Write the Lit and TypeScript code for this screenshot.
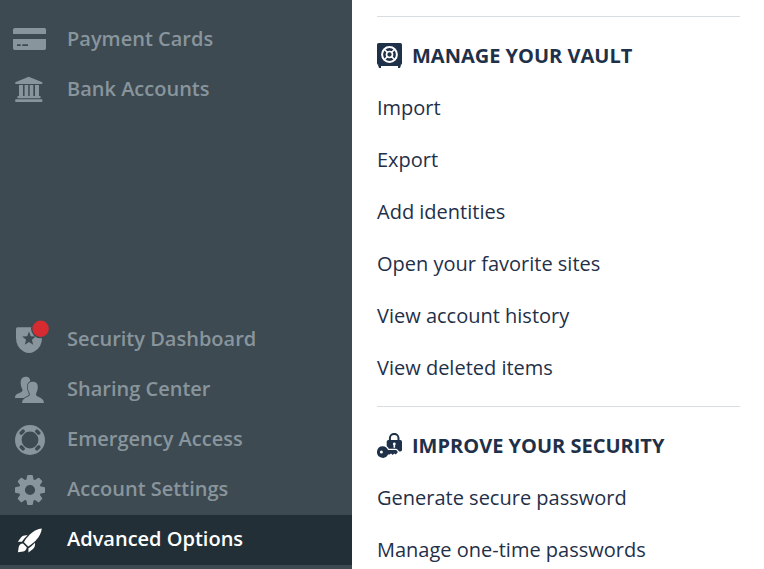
import { LitElement, html, css, svg } from "lit";
import { customElement } from "lit/decorators.js";
import { classMap } from "lit/directives/class-map.js";

const ring = [45, 135, 225, 315];

const navIcons = {
  card: svg`
    <path fill="currentColor" d="M15 13h29.500q1.500 0 1.500 1.500V19H13v-4.500q0-1.500 2-1.500z"/>
    <path fill="currentColor" fill-rule="evenodd" d="M13 24h33v9.200q0 1.800-1.800 1.800H14.800Q13 35 13 33.200zM17 29.300v1.600h3.700v-1.600zM22.300 29.300v1.600H28v-1.600z"/>`,
  bank: svg`
    <path fill="currentColor" d="M28.700 11.700L42.300 17.300V19H15.300v-1.700zM19 20h4v11h-4zM24.600 20h3.600v11h-3.600zM29.700 20h3.600v11h-3.600zM35 20h4v11h-4zM17.500 31h23v2.200h-23zM15.300 34.200h27V37h-27z"/>`,
  shield: svg`
    <path fill="currentColor" d="M16 14q0-1.700 1.700-1.700H42V23q0 9.500-8 13.700-5 2.600-10 0Q16 32.500 16 23z"/>
    <path fill="#3d4a52" d="M29 16.600l1.800 4.700 5 .3-3.900 3.200 1.300 4.900-4.200-2.800-4.200 2.800 1.300-4.900-3.900-3.200 5-.3z"/>
    <circle cx="40.600" cy="13.700" r="9.600" fill="#3d4a52"/>
    <circle cx="40.600" cy="13.700" r="8.200" fill="#d62b31"/>`,
  people: svg`
    <path fill="currentColor" d="M25.500 11.800c3.500 0 5 2 4.700 5-.1 2-.6 2.900-1 4-.5 1.400-1.200 2-1.200 3 0 2 3 2.700 6 4.200V33H15c0-3 1.500-4 4.500-5 2.300-.8 3.200-1.700 3-3.200-.2-1-1.300-2.300-1.500-4-.9-5.200.3-9 4.500-9z"/>
    <path fill="currentColor" stroke="#3d4a52" stroke-width="1.700" paint-order="stroke" d="M32.800 16.700c4 0 5.400 2.700 4.900 6.500-.2 2-.8 3.300-1.300 4.500-.6 1.300-.4 2.800.8 3.600 2.500 1.500 6.600 2 6.800 6.700H22c.2-4.700 4.300-5.200 6.600-6.700 1.200-.8 1.500-2.300.8-3.600-.6-1.200-1.300-2.500-1.500-4.500-.5-3.800.9-6.500 4.900-6.500z"/>`,
  lifebuoy: svg`
    <circle cx="30" cy="25" r="11.700" fill="none" stroke="currentColor" stroke-width="6.600"/>
    ${ring.map(
      (a) => svg`<rect x="27" y="12.200" width="6" height="3.500" rx="1.400" fill="#3d4a52" transform="rotate(${a} 30 25)"/>`
    )}`,
  gear: svg`
    ${[0, 45, 90, 135, 180, 225, 270, 315].map(
      (a) => svg`<path fill="currentColor" transform="rotate(${a} 30 25)" d="M26.200 16l.9-5q.1-1 1-1h3.800q.9 0 1 1l.9 5z"/>`
    )}
    <circle cx="30" cy="25" r="8.100" fill="none" stroke="currentColor" stroke-width="6"/>`,
  rocket: svg`
    <g transform="translate(30 25.300) rotate(45)" fill="currentColor">
      <path d="M0-16.700C2.500-13.500 4-9.500 4.200-4 4.200-.5 3.800 2.800 3 5.600H-3C-3.800 2.800-4.200-.5-4.200-4-4-9.500-2.500-13.500 0-16.700z"/>
      <path d="M-5.200-1.800C-7.400-.2-8.500 2-8.300 4.500l.8 5.200L-4.600 6.800C-5.200 4-5.400 1-5.200-1.800zM5.200-1.800C7.400-.2 8.500 2 8.300 4.500l-.8 5.200L4.600 6.800C5.200 4 5.400 1 5.200-1.800z"/>
      <path d="M-2.700 7.300H2.700C4.200 9 4.300 11 3.200 12.800L0 17l-3.200-4.200C-4.300 11-4.200 9-2.700 7.300z"/>
    </g>`,
};

const sectionIcons = {
  vault: svg`
    <path fill="currentColor" d="M1.700 0h21.600Q25 0 25 1.700v18.600q0 1.700-1.700 1.700H1.700Q0 22 0 20.300V1.700Q0 0 1.700 0zM1 22h3v3H2zM21 22h3l-1 3h-2z"/>
    <path fill="currentColor" d="M3 22h19v1H3z"/>
    <circle cx="12.500" cy="11.500" r="7.400" fill="none" stroke="#fff" stroke-width="2"/>
    <circle cx="12.500" cy="11.500" r="3" fill="none" stroke="#fff" stroke-width="1.700"/>
    ${ring.map(
      (a) => svg`<path d="M12.500 4.500v4" stroke="#fff" stroke-width="1.500" transform="rotate(${a} 12.500 11.500)"/>`
    )}`,
  keys: svg`
    <path d="M12.900 8V5.200a4.200 4.200 0 0 1 8.600 0V8" fill="none" stroke="currentColor" stroke-width="2"/>
    <rect x="9.700" y="7" width="15.300" height="11.500" rx="1.700" fill="currentColor"/>
    <path fill="#fff" d="M17.300 9.500a1.500 1.500 0 0 1 .8 2.700v2.600h-1.600v-2.600a1.500 1.500 0 0 1 .8-2.700z"/>
    <path fill="currentColor" stroke="#fff" stroke-width="2.400" stroke-linejoin="round" paint-order="stroke" fill-rule="evenodd" d="M5.700 13.200a5.700 5.700 0 0 1 5.300 3.800h8.200l1.700 1.900-2.100 2.700-1.600-1-1.500 1.400-1.600-1.400-1.500 1H11a5.800 5.800 0 1 1-5.300-8.400z"/>
    <circle cx="4.400" cy="19" r="1.500" fill="#fff"/>`,
};

type NavItem = { label: string; icon: keyof typeof navIcons; active?: boolean };

const vaultNav: NavItem[] = [
  { label: "Payment Cards", icon: "card" },
  { label: "Bank Accounts", icon: "bank" },
];

const accountNav: NavItem[] = [
  { label: "Security Dashboard", icon: "shield" },
  { label: "Sharing Center", icon: "people" },
  { label: "Emergency Access", icon: "lifebuoy" },
  { label: "Account Settings", icon: "gear" },
  { label: "Advanced Options", icon: "rocket", active: true },
];

const sections: { title: string; icon: keyof typeof sectionIcons; links: string[] }[] = [
  {
    title: "MANAGE YOUR VAULT",
    icon: "vault",
    links: [
      "Import",
      "Export",
      "Add identities",
      "Open your favorite sites",
      "View account history",
      "View deleted items",
    ],
  },
  {
    title: "IMPROVE YOUR SECURITY",
    icon: "keys",
    links: ["Generate secure password", "Manage one-time passwords"],
  },
];

@customElement("app-root")
export class AppRoot extends LitElement {
  static styles = css`
    :host {
      display: flex;
      height: 569px;
      overflow: hidden;
      background: #fff;
      font: 20px/28px "Open Sans", "Noto Sans", sans-serif;
      color: #1f3049;
    }
    .sidebar {
      flex: none;
      width: 352px;
      box-sizing: border-box;
      padding: 15px 0 4px;
      display: flex;
      flex-direction: column;
      justify-content: space-between;
      background: #3d4a52;
    }
    .nav-item {
      display: flex;
      align-items: center;
      height: 50px;
      color: #89959c;
      font-weight: 600;
    }
    .nav-item.active {
      background: #222f37;
      color: #fff;
    }
    .nav-icon {
      flex: none;
      width: 60px;
      height: 50px;
      margin-right: 7px;
    }
    .nav-label {
      padding-bottom: 2px;
    }
    .panel {
      flex: 1;
      padding: 16px 24px 0 25px;
    }
    .section {
      border-top: 1px solid #d8dce3;
      padding: 13px 0 12px;
    }
    .title,
    .link {
      display: flex;
      align-items: center;
      height: 52px;
      white-space: nowrap;
    }
    .title {
      gap: 10px;
      font-weight: 700;
    }
    .section-icon {
      flex: none;
      width: 25px;
      height: 25px;
      margin-bottom: 1px;
    }
  `;

  private renderNav(items: NavItem[]) {
    return html`<div>
      ${items.map(
        (item) => html`<div class=${classMap({ "nav-item": true, active: !!item.active })}>
          <svg class="nav-icon" viewBox="0 0 60 50">${navIcons[item.icon]}</svg>
          <span class="nav-label">${item.label}</span>
        </div>`
      )}
    </div>`;
  }

  render() {
    return html`
      <nav class="sidebar">${this.renderNav(vaultNav)} ${this.renderNav(accountNav)}</nav>
      <main class="panel">
        ${sections.map(
          (s) => html`<section class="section">
            <div class="title">
              <svg class="section-icon" viewBox="0 0 25 25">${sectionIcons[s.icon]}</svg>
              <span>${s.title}</span>
            </div>
            ${s.links.map((l) => html`<div class="link">${l}</div>`)}
          </section>`
        )}
      </main>
    `;
  }
}
